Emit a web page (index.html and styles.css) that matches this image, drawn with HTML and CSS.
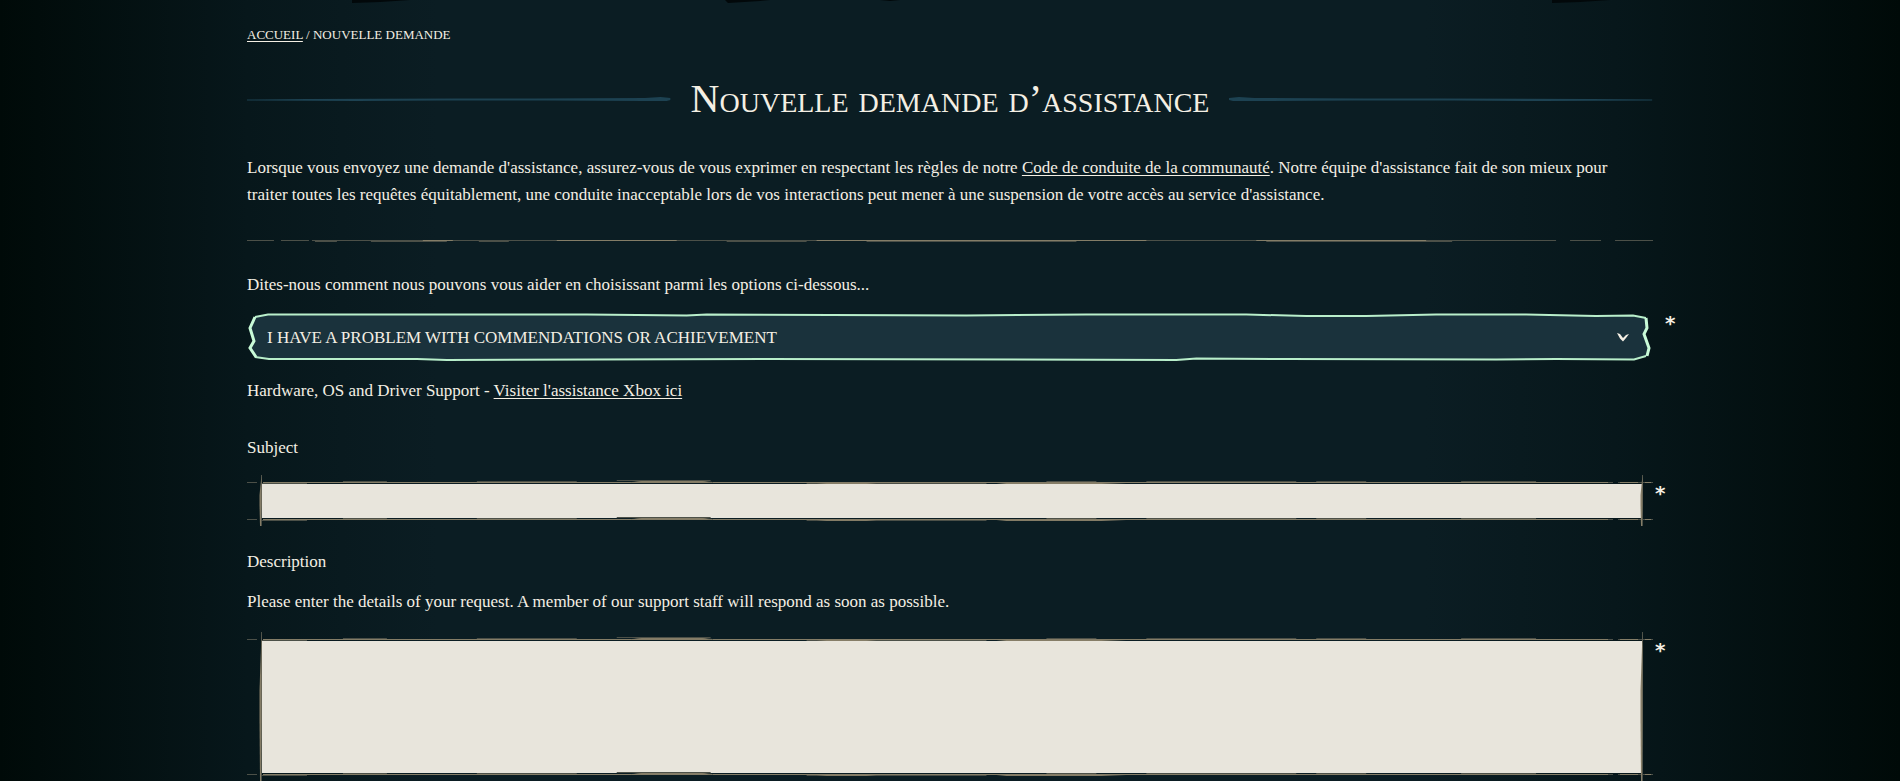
FILE: index.html
```
<!DOCTYPE html>
<html lang="fr">
  <head>
    <meta charset="UTF-8" />
    <meta name="viewport" content="width=device-width, initial-scale=1.0" />
    <title>Nouvelle demande d’assistance</title>
    <link rel="stylesheet" href="styles.css" />
  </head>
  <body>
    <!-- shared brush strokes -->
    <svg class="symbols" aria-hidden="true">
      <symbol id="title-stroke" viewBox="0 0 426 5" preserveAspectRatio="none">
        <path d="M0 2.5L60 2L210 1.5L290 1.5L400 1L416 0L426 1V3L422 4H400L300 3.5H200L110 4L0 3.5Z" />
      </symbol>
      <symbol id="field-stroke" viewBox="0 0 1407 5" preserveAspectRatio="none">
        <path class="faint" d="M0 2.5H10M14 3.5H60M96 1.5H140M230 1.5H330M370 .5H464M560 3.5H740M800 1.5H850M900 1.5H1050M1070 1.5H1120M1215 1.5H1290M1300 2.5H1367M1372 2.5H1407" />
        <path class="bright" d="M16 2.5H385L400 1.5H455L466 2.5H1362M1374 2.5H1392M1399 2.5H1405" />
        <path class="fill" d="M380 3L395 1H455L466 3ZM560 2H640L620 4H580ZM750 3L770 2H830L880 4H760Z" />
      </symbol>
      <symbol id="side-stroke" viewBox="0 0 4 51" preserveAspectRatio="none">
        <path class="faint" d="M2.5 0V51" />
        <path class="fill" d="M1.5 10L2.5 0V30L2 51H1L.5 30V20Z" />
      </symbol>
    </svg>

    <svg class="torn-edge" viewBox="0 0 1900 4" preserveAspectRatio="none" aria-hidden="true">
      <path d="M352 0H410L380 2L352 3ZM725 0H770L760 1L728 3ZM880 0H900L890 1ZM1552 0H1610L1580 2L1552 3Z" />
    </svg>

    <main class="container">
      <nav class="breadcrumbs"><a href="#">Accueil</a> / <span>Nouvelle demande</span></nav>

      <header class="page-title">
        <svg class="title-line" aria-hidden="true"><use href="#title-stroke" /></svg>
        <h1>Nouvelle demande d’assistance</h1>
        <svg class="title-line title-line-right" aria-hidden="true"><use href="#title-stroke" /></svg>
      </header>

      <p class="intro">
        Lorsque vous envoyez une demande d'assistance, assurez-vous de vous exprimer en respectant les règles de notre
        <a href="#">Code de conduite de la communauté</a>. Notre équipe d'assistance fait de son mieux pour<br />
        traiter toutes les requêtes équitablement, une conduite inacceptable lors de vos interactions peut mener à une
        suspension de votre accès au service d'assistance.
      </p>

      <svg class="divider" viewBox="0 0 1407 3" preserveAspectRatio="none" aria-hidden="true">
        <path class="faint" d="M0 .5H27M34 .5H62M65 .5H1310M1324 .5H1355M1369 .5H1407M68 1.5H90M124 1.5H200M232 1.5H262M480 1.5H560M620 1.5H830M1020 1.5H1206" />
        <path class="bright" d="M176 .5H206M310 .5H430M570 .5H900M1010 .5H1180" />
      </svg>

      <form>
        <label for="request-type">Dites-nous comment nous pouvons vous aider en choisissant parmi les options ci-dessous...</label>
        <div class="select-field">
          <svg class="select-frame" viewBox="0 0 1407 48" preserveAspectRatio="none" aria-hidden="true">
            <path class="frame-fill" d="M8 4L21 1L430 2L470 1L1030 3L1150 2L1386 3L1401 5L1402 15L1398 21L1404 35L1402 43L1388 47L950 46L190 47L22 46L8 43L3 35L7 28L3 15Z" />
            <path class="frame-edge" d="M8 4L21 1.5L340 1.5L440 2.5L460 1.5L720 2.5L840 1.5L1000 1.5L1060 3L1120 3L1190 1.5L1280 1.5L1350 3L1387 2.5L1400 5M8 44L22 46L170 46L200 47L520 46L930 47L950 45.5L1040 46L1250 46.5L1310 46L1388 46.5L1400 43" />
            <path class="frame-side" d="M8 4L3 15L7 28L3 35L9 44M1400 5L1401 15L1398 21L1403 35L1401 43" />
          </svg>
          <select id="request-type" required>
            <option>I have a problem with commendations or achievement</option>
          </select>
          <svg class="chevron" viewBox="0 0 12 9" aria-hidden="true">
            <path d="M0 0L3 1L6 5L9 2L12 1L9 5L6 8.5L3 5.5Z" />
          </svg>
          <span class="required">*</span>
        </div>
        <p class="hint">Hardware, OS and Driver Support - <a href="#">Visiter l'assistance Xbox ici</a></p>

        <label for="subject">Subject</label>
        <div class="text-field">
          <input type="text" id="subject" required />
          <svg class="stroke top" aria-hidden="true"><use href="#field-stroke" /></svg>
          <svg class="stroke bottom" aria-hidden="true"><use href="#field-stroke" /></svg>
          <svg class="stroke left" aria-hidden="true"><use href="#side-stroke" /></svg>
          <svg class="stroke right" aria-hidden="true"><use href="#side-stroke" /></svg>
          <span class="required">*</span>
        </div>

        <label for="description">Description</label>
        <p class="help">Please enter the details of your request. A member of our support staff will respond as soon as possible.</p>
        <div class="text-field">
          <textarea id="description" required></textarea>
          <svg class="stroke top" aria-hidden="true"><use href="#field-stroke" /></svg>
          <svg class="stroke bottom" aria-hidden="true"><use href="#field-stroke" /></svg>
          <svg class="stroke left" aria-hidden="true"><use href="#side-stroke" /></svg>
          <svg class="stroke right" aria-hidden="true"><use href="#side-stroke" /></svg>
          <span class="required">*</span>
        </div>
      </form>
    </main>
  </body>
</html>
```
FILE: styles.css
```
* {
  box-sizing: border-box;
}

body {
  margin: 0;
  color: #f4efe4;
  font-family: "Liberation Serif", "Times New Roman", serif;
  font-size: 17px;
  line-height: 27px;
  background: linear-gradient(90deg, #000a08, #07171b 13%, #0b1d23 23%, #0b1d23 75%, #07171b 85%, #000a08);
}

a {
  color: inherit;
  text-underline-offset: 2px;
}

h1,
p {
  margin: 0;
}

.symbols {
  position: absolute;
  width: 0;
  height: 0;
}

.torn-edge {
  display: block;
  width: 100%;
  height: 4px;
  fill: #02080a;
}

.container {
  width: 74%;
  margin: 0 auto;
}

.breadcrumbs {
  padding-top: 17px;
  font-size: 13px;
  text-transform: uppercase;
}

/* title */
.page-title {
  display: flex;
  align-items: center;
  gap: 20px;
  padding-top: 24px;
}

.page-title h1 {
  font-size: 40px;
  line-height: 54px;
  font-weight: normal;
  font-variant: small-caps;
  white-space: nowrap;
}

.title-line {
  flex: 1;
  min-width: 0;
  height: 5px;
  fill: #1d4252;
}

.title-line-right {
  transform: scaleX(-1);
}

.intro {
  padding-top: 28px;
}

.divider {
  display: block;
  width: 100%;
  height: 3px;
  margin: 32px 0 28px;
}

.faint {
  fill: none;
  stroke: #4c5048;
}

.bright {
  fill: none;
  stroke: #857d67;
}

.fill {
  fill: #857d67;
}

/* form */
label {
  display: block;
}

.select-field,
.text-field {
  position: relative;
}

.select-field {
  margin: 15px 0 16px;
}

.select-frame {
  position: absolute;
  width: 100%;
  height: 48px;
}

.frame-fill {
  fill: #1a323c;
}

.frame-edge {
  fill: none;
  stroke: #b9efcb;
  stroke-width: 2;
}

.frame-side {
  fill: none;
  stroke: #c9fbd8;
  stroke-width: 3;
}

select {
  position: relative;
  display: block;
  width: 100%;
  height: 48px;
  padding: 0 48px 0 20px;
  border: 0;
  color: inherit;
  background: transparent;
  font-family: inherit;
  font-size: 17px;
  text-transform: uppercase;
  appearance: none;
  cursor: pointer;
}

.chevron {
  position: absolute;
  top: 20px;
  right: 24px;
  width: 12px;
  height: 9px;
  fill: #f4efe4;
  pointer-events: none;
}

.required {
  position: absolute;
  top: 8px;
  left: 100%;
  padding-left: 2px;
  font-family: "DejaVu Sans", sans-serif;
  font-size: 20px;
  font-weight: bold;
  line-height: 20px;
}

.select-field .required {
  top: 0;
  padding-left: 12px;
}

.hint {
  padding-bottom: 30px;
}

.text-field {
  padding: 9px 11px 8px 15px;
}

.text-field input,
.text-field textarea {
  display: block;
  width: 100%;
  height: 34px;
  padding: 4px 12px;
  border: 0;
  border-radius: 0;
  color: #0b1d23;
  background: #e8e5dc;
  font: inherit;
  resize: none;
}

.text-field textarea {
  height: 132px;
}

label[for="subject"] {
  margin-bottom: 14px;
}

label[for="description"] {
  margin: 22px 0 13px;
}

.help {
  margin-bottom: 17px;
}

.stroke {
  position: absolute;
  pointer-events: none;
}

.stroke.top,
.stroke.bottom {
  left: 0;
  width: 100%;
  height: 5px;
}

.stroke.top {
  top: 5px;
}

.stroke.bottom {
  bottom: 4px;
}

.stroke.left,
.stroke.right {
  top: 0;
  width: 4px;
  height: 100%;
}

.stroke.left {
  left: 12px;
}

.stroke.right {
  right: 9px;
}
```
